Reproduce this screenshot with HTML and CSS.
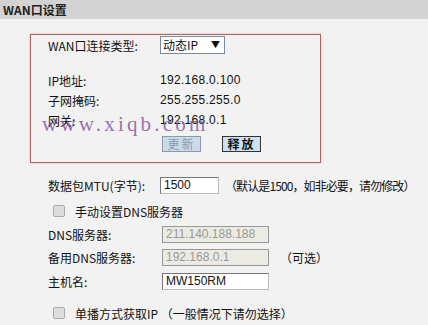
FILE: index.html
```html
<!DOCTYPE html>
<html lang="zh">
<head>
<meta charset="utf-8">
<link rel="stylesheet" href="styles.css">
</head>
<body>
<div class="header">WAN口设置</div>
<div class="box">
  <div class="row first">
    <span class="label">WAN口连接类型:</span>
    <span class="select">动态IP<span class="arrow">▼</span></span>
  </div>
  <div class="row gap">
    <span class="label">IP地址:</span>
    <span class="value">192.168.0.100</span>
  </div>
  <div class="row">
    <span class="label">子网掩码:</span>
    <span class="value">255.255.255.0</span>
  </div>
  <div class="row">
    <span class="label">网关:</span>
    <span class="value">192.168.0.1</span>
  </div>
  <div class="btns">
    <span class="btn disabled">更新</span>
    <span class="btn">释放</span>
  </div>
  <div class="watermark">www.xiqb.com</div>
</div>
<div class="form">
  <div class="frow r-mtu">
    <span class="label">数据包MTU(字节):</span>
    <span class="input short">1500</span>
    <span class="note mtu-note">（默认是1500，如非必要，请勿修改）</span>
  </div>
  <div class="frow r-chk">
    <span class="chk"></span><span class="chktext">手动设置DNS服务器</span>
  </div>
  <div class="frow r-dns">
    <span class="label">DNS服务器:</span>
    <span class="input off">211.140.188.188</span>
  </div>
  <div class="frow r-dns">
    <span class="label">备用DNS服务器:</span>
    <span class="input off">192.168.0.1</span>
    <span class="note">（可选）</span>
  </div>
  <div class="frow r-host">
    <span class="label">主机名:</span>
    <span class="input">MW150RM</span>
  </div>
  <div class="frow r-chk2">
    <span class="chk"></span><span class="chktext">单播方式获取IP （一般情况下请勿选择）</span>
  </div>
</div>
</body>
</html>
```

FILE: styles.css
```css
html, body {
  margin: 0;
  padding: 0;
  background: #f2f2f2;
  font-family: "Noto Sans CJK SC", "Liberation Sans", sans-serif;
  font-size: 12px;
  color: #111;
}
.header {
  height: 19px;
  line-height: 19px;
  background: #d3d3d3;
  padding-left: 3px;
  font-weight: bold;
  font-size: 12px;
  color: #222;
}
.box {
  position: relative;
  box-sizing: border-box;
  margin: 15px 0 0 30px;
  width: 291px;
  height: 129px;
  border: 1px solid #a86464;
  box-shadow: 0 0 2px rgba(240,160,160,0.7);
  padding-left: 17px;
}
.row {
  display: flex;
  align-items: center;
  height: 20px;
}
.row.gap { margin-top: 15px; }
.label {
  width: 112px;
  flex: none;
  font-size: 12px;
}
.value {
  font-family: "Liberation Sans", sans-serif;
  font-size: 12px;
  letter-spacing: 0.3px;
  word-spacing: 1px;
}
.select {
  display: inline-flex;
  align-items: center;
  justify-content: space-between;
  width: 57px;
  height: 16px;
  border: 1px solid #7a8a9a;
  background: #fff;
  padding: 0 4px 0 2px;
  font-size: 12px;
  line-height: 16px;
}
.arrow { font-size: 9px; }
.btns {
  display: flex;
  gap: 21px;
  margin: 6px 0 0 114px;
}
.btn {
  width: 37px;
  height: 14px;
  border: 1px solid #333;
  background: #cfe1ee;
  text-align: center;
  line-height: 14px;
  font-size: 12px;
  letter-spacing: 2px;
  font-weight: bold;
}
.btn.disabled {
  border-color: #8a9aa8;
  color: #8b9bb0;
  font-weight: normal;
  background: #c8dcea;
}
.watermark {
  position: absolute;
  left: 11px;
  top: 77px;
  font-family: "Liberation Serif", serif;
  font-size: 21px;
  letter-spacing: 3.2px;
  color: rgba(120, 70, 150, 0.75);
  pointer-events: none;
}
.form {
  padding-left: 48px;
}
.frow {
  display: flex;
  align-items: center;
  height: 20px;
  white-space: nowrap;
}
.r-mtu { margin-top: 12px; }
.r-chk { margin-top: 6px; }
.r-dns { margin-top: 3px; }
.r-host { margin-top: 4px; }
.r-chk2 { margin-top: 12px; }
.input {
  box-sizing: border-box;
  width: 107px;
  height: 17px;
  border: 1px solid #777;
  border-right-color: #bbb;
  border-bottom-color: #bbb;
  background: #fff;
  font-family: "Liberation Sans", sans-serif;
  font-size: 12px;
  line-height: 15px;
  padding-left: 3px;
  margin-left: 2px;
}
.input.short {
  width: 59px;
  margin-left: 0;
}
.input.off {
  background: #ebebe4;
  color: #999;
  border-color: #999;
}
.note {
  margin-left: 11px;
  font-size: 12px;
}
.mtu-note {
  margin-left: 6px;
  letter-spacing: -0.9px;
}
.chk {
  width: 10px;
  height: 10px;
  border: 1px solid #aaa;
  border-radius: 2px;
  background: #ddd;
  margin-left: 5px;
  margin-right: 10px;
}
.chktext { font-size: 12px; }
```
